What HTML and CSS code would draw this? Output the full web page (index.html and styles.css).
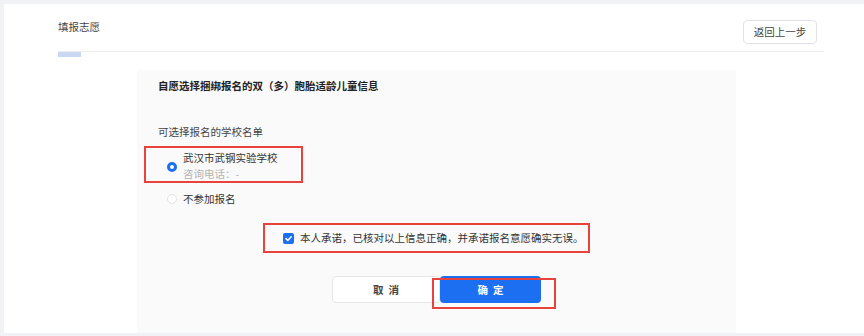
FILE: index.html
```html
<!DOCTYPE html>
<html>
<head>
	<meta charset="utf-8">
	<link rel="stylesheet" href="styles.css">
</head>
<body>
	<div class="card">
		<div class="head">
			<div class="head_title">填报志愿</div>
			<div class="btn_back">返回上一步</div>
		</div>
		<div class="tab_bar"></div>
		<div class="panel">
			<div class="panel_title">自愿选择捆绑报名的双（多）胞胎适龄儿童信息</div>
			<div class="label">可选择报名的学校名单</div>
			<div class="mark school_box">
				<span class="radio checked"></span>
				<div class="school">
					<div class="school_name">武汉市武钢实验学校</div>
					<div class="school_tel">咨询电话：-</div>
				</div>
			</div>
			<div class="opt_none">
				<span class="radio"></span>
				<span>不参加报名</span>
			</div>
			<div class="mark promise">
				<span class="check">
					<svg width="11" height="11" viewBox="0 0 11 11"><path d="M3 5.6 L4.8 7.4 L8.2 3.8" fill="none" stroke="#fff" stroke-width="1.5" stroke-linecap="round" stroke-linejoin="round"/></svg>
				</span>
				<span>本人承诺，已核对以上信息正确，并承诺报名意愿确实无误。</span>
			</div>
			<div class="actions">
				<div class="btn btn_cancel">取消</div>
				<div class="ok_wrap">
					<div class="btn btn_ok">确定</div>
				</div>
			</div>
		</div>
	</div>
</body>
</html>
```

FILE: styles.css
```css
body {
	margin: 0;
	padding: 0;
	width: 864px;
	height: 336px;
	overflow: hidden;
	background: #f1f2f4;
	font-family: "Noto Sans CJK SC", "Noto Sans", sans-serif;
	font-size: 10.5px;
	line-height: 14px;
	color: #333;
}
.card {
	margin: 4px 0 0 4px;
	height: 329px;
	background: #fff;
	padding: 0 40px 0 54px;
	overflow: hidden;
}
.head {
	height: 47px;
	border-bottom: 1px solid #eceef2;
	display: flex;
	justify-content: space-between;
	align-items: flex-start;
	box-sizing: border-box;
	padding-top: 16px;
	height: 48px;
}
.head_title {
	color: #444;
}
.btn_back {
	margin-right: 7px;
	width: 74px;
	height: 24px;
	box-sizing: border-box;
	border: 1px solid #e1e3e8;
	border-radius: 4px;
	display: flex;
	align-items: center;
	justify-content: center;
	color: #444;
}
.tab_bar {
	width: 23px;
	height: 5px;
	background: #c9d7f3;
}
.panel {
	margin: 13px 0 0 79px;
	width: 599px;
	height: 270px;
	background: #fafafa;
	padding: 9px 0 0 21px;
	box-sizing: border-box;
}
.panel_title {
	font-weight: bold;
	color: #222;
}
.label {
	margin-top: 32px;
	color: #444;
}
.mark {
	border: 2px solid #e8423d;
}
.school_box {
	margin: 7px 0 0 -14px;
	width: 159px;
	height: 37px;
	box-sizing: border-box;
	display: flex;
	align-items: flex-start;
	padding: 3px 0 0 21px;
}
.radio {
	width: 10px;
	height: 10px;
	border-radius: 50%;
	box-sizing: border-box;
	border: 1px solid #e0e2e6;
	background: #fff;
	flex: none;
}
.radio.checked {
	border: 3px solid #1d6ff2;
	background: #fff;
}
.school_box .radio {
	margin-top: 11px;
}
.school {
	margin-left: 6px;
}
.school_name {
	color: #333;
}
.school_tel {
	margin-top: 2px;
	color: #b4b4b4;
}
.opt_none {
	margin: 9px 0 0 9px;
	display: flex;
	align-items: center;
	gap: 6px;
	color: #333;
}
.promise {
	margin: 17px 0 0 105px;
	width: 327px;
	height: 30px;
	box-sizing: border-box;
	display: flex;
	align-items: center;
	padding-left: 18px;
	gap: 6px;
	color: #333;
}
.check {
	width: 11px;
	height: 11px;
	border-radius: 2px;
	background: #1d6ff2;
	display: flex;
	flex: none;
}
.actions {
	margin: 23px 0 0 174px;
	display: flex;
}
.btn {
	height: 27px;
	border-radius: 4px;
	box-sizing: border-box;
	display: flex;
	align-items: center;
	justify-content: center;
	font-weight: bold;
	letter-spacing: 5px;
	text-indent: 5px;
}
.btn_cancel {
	width: 108px;
	border: 1px solid #e4e6ea;
	background: #fff;
	color: #444;
}
.ok_wrap {
	position: relative;
}
.ok_wrap::after {
	content: "";
	position: absolute;
	left: -8px;
	top: 2px;
	width: 124px;
	height: 31px;
	box-sizing: border-box;
	border: 2px solid #e8423d;
}
.btn_ok {
	width: 101px;
	background: #1d6ff2;
	color: #fff;
}
```
